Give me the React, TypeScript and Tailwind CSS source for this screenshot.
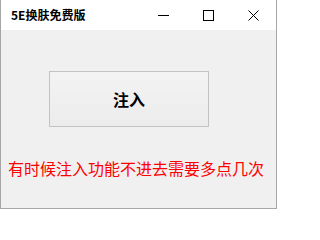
export default function App() {
  const font = { fontFamily: '"Noto Sans CJK SC", "Noto Sans", sans-serif' };

  return (
    <div
      className="w-[277px] h-[209px] flex flex-col border-x border-b border-[#a6a6a6] bg-[#f0f0f0] overflow-hidden"
      style={font}
    >
      {/* title bar */}
      <div className="h-[30px] bg-white flex items-center shrink-0">
        <span className="pl-[10px] text-[12px] font-bold text-black leading-none flex-1">
          5E换肤免费版
        </span>
        <div className="flex h-full">
          <div className="w-[45px] h-full flex items-center justify-center">
            <svg width="11" height="11" viewBox="0 0 11 11" shapeRendering="crispEdges">
              <line x1="0" y1="5.5" x2="11" y2="5.5" stroke="#000" strokeWidth="1" />
            </svg>
          </div>
          <div className="w-[45px] h-full flex items-center justify-center">
            <svg width="11" height="11" viewBox="0 0 11 11" shapeRendering="crispEdges">
              <rect x="0.5" y="0.5" width="10" height="10" fill="none" stroke="#000" strokeWidth="1" />
            </svg>
          </div>
          <div className="w-[45px] h-full flex items-center justify-center">
            <svg width="11" height="11" viewBox="0 0 11 11">
              <path d="M0.5 0.5 L10.5 10.5 M10.5 0.5 L0.5 10.5" stroke="#000" strokeWidth="1" />
            </svg>
          </div>
        </div>
      </div>

      {/* body */}
      <div className="flex-1 flex flex-col">
        <div className="pl-[48px] pt-[41px]">
          <button className="w-[160px] h-[56px] border border-[#c3c3c3] bg-gradient-to-b from-[#f3f3f3] to-[#ececec] flex items-center justify-center text-[16px] font-bold text-black leading-none">
            注入
          </button>
        </div>
        <p className="pl-[7px] mt-[31px] text-[16px] leading-[20px] text-[#ff0000] whitespace-nowrap">
          有时候注入功能不进去需要多点几次
        </p>
      </div>
    </div>
  );
}
